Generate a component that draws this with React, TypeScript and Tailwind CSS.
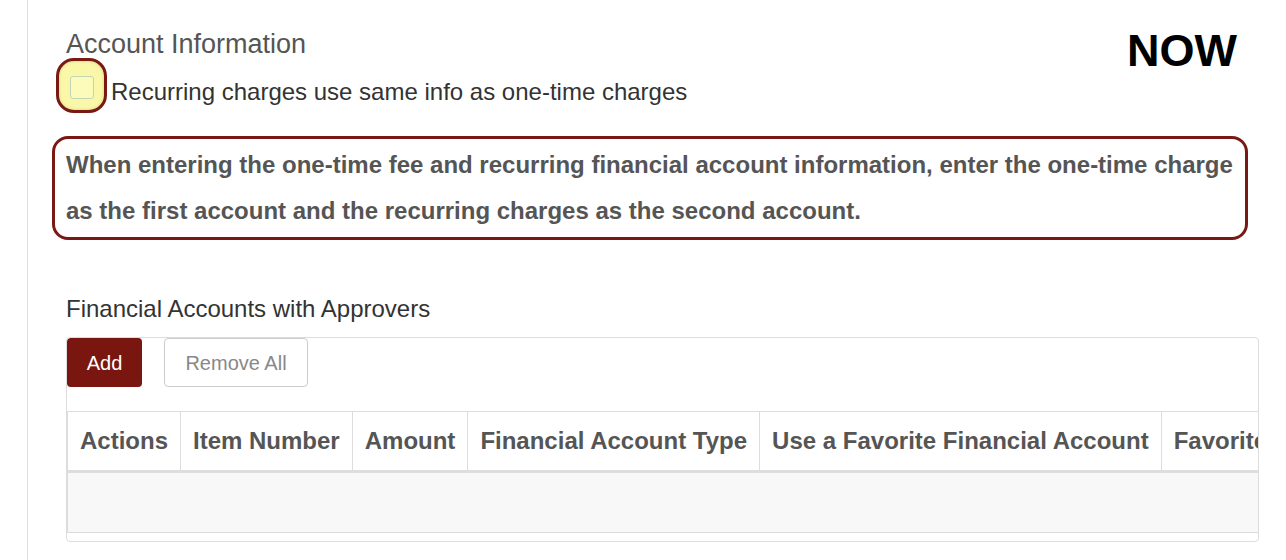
const columns = [
  "Actions",
  "Item Number",
  "Amount",
  "Financial Account Type",
  "Use a Favorite Financial Account",
  "Favorite Financial Account",
];

export default function App() {
  return (
    <div className="relative min-h-[560px] w-[1286px] bg-white font-['Liberation_Sans',Arial,sans-serif]">
      <div className="ml-[27px] min-h-[560px] border-l border-[#dddddd] pl-[38px] pr-[27px] pt-[29px]">
        {/* annotation */}
        <div className="absolute right-[49px] top-[28px] text-[45px] font-bold leading-none text-black">
          NOW
        </div>

        <h2 className="text-[27px] leading-[30px] text-[#555555]">Account Information</h2>

        <div className="flex items-start">
          <div className="-ml-[10px] -mt-[1px] flex h-[55px] w-[51px] items-center justify-center rounded-[18px] border-[3px] border-[#7a1913] bg-[#fbf7a8] shadow-[inset_0_0_3px_rgba(150,160,90,0.5)]">
            <div className="mt-[4px] h-[23px] w-[24px] rounded-[3px] border border-[#c2d6b6] bg-[#fdfbba]" />
          </div>
          <label className="ml-[4px] mt-[19px] text-[24px] leading-[28px] text-[#333333]">
            Recurring charges use same info as one-time charges
          </label>
        </div>

        <div className="-ml-[14px] mt-[23px] w-[1196px] rounded-[16px] border-[3px] border-[#7a1913] py-[3px] pl-[11px]">
          <p className="text-[24px] font-bold leading-[46px] text-[#555555]">
            When entering the one-time fee and recurring financial account information, enter the one-time charge as the
            first account and the recurring charges as the second account.
          </p>
        </div>

        <h3 className="mt-[55px] text-[24px] leading-[28px] text-[#333333]">Financial Accounts with Approvers</h3>

        <div className="mt-[14px] overflow-hidden rounded-[4px] border border-[#dddddd] pb-[8px]">
          <div className="flex gap-[22px]">
            <button className="h-[49px] w-[75px] rounded-[4px] bg-[#7a1610] text-[20px] text-white">Add</button>
            <button className="h-[49px] w-[144px] rounded-[4px] border border-[#cccccc] bg-white text-[20px] text-[#888888]">
              Remove All
            </button>
          </div>

          <table className="mt-[24px] w-max border-collapse whitespace-nowrap">
            <thead>
              <tr>
                {columns.map((c) => (
                  <th
                    key={c}
                    className="h-[60px] border-x border-t border-b-[3px] border-[#dddddd] px-3 text-left text-[24px] font-bold leading-[34px] text-[#555555]"
                  >
                    {c}
                  </th>
                ))}
              </tr>
            </thead>
            <tbody>
              <tr>
                <td colSpan={columns.length} className="h-[61px] border-x border-b border-[#dddddd] bg-[#f8f8f8]" />
              </tr>
            </tbody>
          </table>
        </div>
      </div>
    </div>
  );
}
